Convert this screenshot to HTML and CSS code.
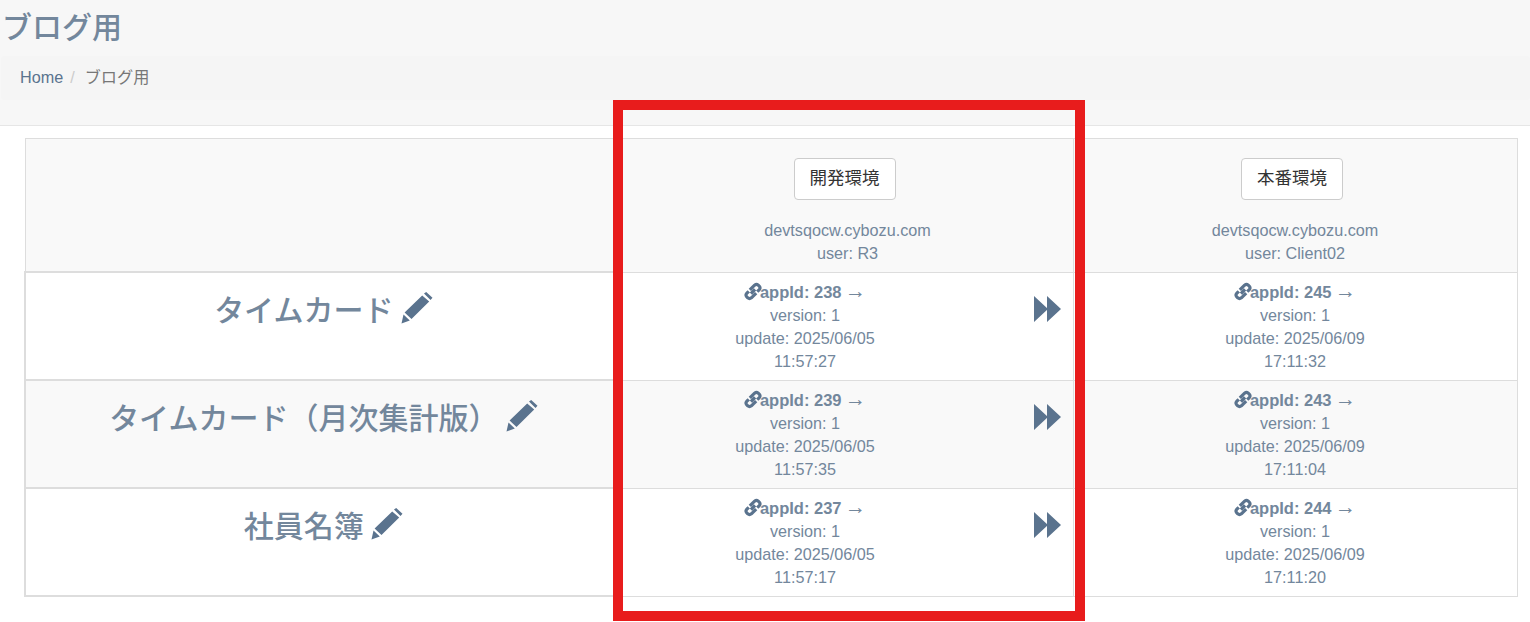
FILE: index.html
```html
<!DOCTYPE html>
<html>
<head>
  <meta charset="UTF-8">
  <title>ブログ用</title>
  <link rel="stylesheet" href="styles.css">
</head>
<body>
  <svg class="defs" width="0" height="0">
    <symbol id="pencil" viewBox="0 0 32 32">
      <path d="M23 1.5 L25.2 0 L31.5 5.8 L29.5 8 Z M21.2 3.4 L28.2 9.6 L10.5 27 L3.6 20.6 Z M2.5 22.5 L8.8 28.4 L0.5 31.5 Z"/>
    </symbol>
    <symbol id="link" viewBox="0 0 17 18">
      <path class="chain" d="M5.5 7.5 L10 3 Q11.8 1.6 13.5 3 L14.5 4 Q15.8 5.6 14.5 7.2 L12.5 9.2 M6.5 11 L10.5 7 M4.5 8.8 L2.5 10.8 Q1.2 12.4 2.5 14 L3.5 15 Q5.2 16.4 7 15 L11.5 10.5"/>
    </symbol>
    <symbol id="forward" viewBox="0 0 27 28">
      <path d="M0 1 L14 14 L0 27 Z M13 1 L27 14 L13 27 Z"/>
    </symbol>
  </svg>

  <div class="page-title">
    <h3>ブログ用</h3>
    <ul class="breadcrumb">
      <li><a href="#">Home</a></li>
      <li class="sep">/</li>
      <li class="active">ブログ用</li>
    </ul>
  </div>

  <div class="content">
    <table class="apps">
      <colgroup>
        <col class="col-name">
        <col class="col-dev">
        <col class="col-prod">
      </colgroup>
      <thead>
        <tr>
          <th></th>
          <th>
            <button class="btn">開発環境</button>
            <div>devtsqocw.cybozu.com</div>
            <div>user: R3</div>
          </th>
          <th>
            <button class="btn">本番環境</button>
            <div>devtsqocw.cybozu.com</div>
            <div>user: Client02</div>
          </th>
        </tr>
      </thead>
      <tbody>
        <tr>
          <td class="name">タイムカード <svg class="pencil"><use href="#pencil"/></svg></td>
          <td>
            <div class="dev-cell">
              <div class="info">
                <div><svg class="link"><use href="#link"/></svg><b>appId: 238</b> <span class="arrow">→</span></div>
                <div>version: 1</div>
                <div>update: 2025/06/05</div>
                <div>11:57:27</div>
              </div>
              <svg class="forward"><use href="#forward"/></svg>
            </div>
          </td>
          <td>
            <div class="info">
              <div><svg class="link"><use href="#link"/></svg><b>appId: 245</b> <span class="arrow">→</span></div>
              <div>version: 1</div>
              <div>update: 2025/06/09</div>
              <div>17:11:32</div>
            </div>
          </td>
        </tr>
        <tr>
          <td class="name">タイムカード（月次集計版） <svg class="pencil"><use href="#pencil"/></svg></td>
          <td>
            <div class="dev-cell">
              <div class="info">
                <div><svg class="link"><use href="#link"/></svg><b>appId: 239</b> <span class="arrow">→</span></div>
                <div>version: 1</div>
                <div>update: 2025/06/05</div>
                <div>11:57:35</div>
              </div>
              <svg class="forward"><use href="#forward"/></svg>
            </div>
          </td>
          <td>
            <div class="info">
              <div><svg class="link"><use href="#link"/></svg><b>appId: 243</b> <span class="arrow">→</span></div>
              <div>version: 1</div>
              <div>update: 2025/06/09</div>
              <div>17:11:04</div>
            </div>
          </td>
        </tr>
        <tr>
          <td class="name">社員名簿 <svg class="pencil"><use href="#pencil"/></svg></td>
          <td>
            <div class="dev-cell">
              <div class="info">
                <div><svg class="link"><use href="#link"/></svg><b>appId: 237</b> <span class="arrow">→</span></div>
                <div>version: 1</div>
                <div>update: 2025/06/05</div>
                <div>11:57:17</div>
              </div>
              <svg class="forward"><use href="#forward"/></svg>
            </div>
          </td>
          <td>
            <div class="info">
              <div><svg class="link"><use href="#link"/></svg><b>appId: 244</b> <span class="arrow">→</span></div>
              <div>version: 1</div>
              <div>update: 2025/06/09</div>
              <div>17:11:20</div>
            </div>
          </td>
        </tr>
      </tbody>
    </table>
  </div>

  <div class="highlight"></div>
</body>
</html>
```

FILE: styles.css
```css
body {
  font-family: "Liberation Sans", "Noto Sans CJK JP", sans-serif;
  font-size: 16.2px;
  line-height: 23.1px;
  color: #73879c;
  background: #fff;
  margin: 0;
  overflow: hidden;
}
.defs { position: absolute; }

.page-title {
  background: #f7f7f7;
  border-bottom: 1px solid #e6e6e6;
  height: 125px;
}
.page-title h3 {
  font-size: 30px;
  font-weight: 500;
  line-height: 36px;
  margin: 0;
  padding: 10px 0 10px 2px;
}
.breadcrumb {
  list-style: none;
  display: flex;
  background: #f5f5f5;
  border-radius: 4px;
  margin: 0 0 0 1px;
  padding: 10px 19px;
  height: 24px;
  line-height: 23px;
}
.breadcrumb a { color: #5a738e; text-decoration: none; }
.breadcrumb .sep { color: #ccc; margin: 0 10px 0 7px; }
.breadcrumb .active { color: #777; }

.content { padding: 12px 12px 0 24px; }
.apps {
  width: 1492px;
  table-layout: fixed;
  border-collapse: collapse;
}
.col-name { width: 597px; }
.col-dev { width: 451px; }
.col-prod { width: 444px; }
.apps th, .apps td {
  border: 1px solid #ddd;
  padding: 8px 8px 4px;
  text-align: center;
  vertical-align: top;
}
.apps th {
  background: #f9f9f9;
  font-weight: 400;
  padding: 19px 8px 6px;
  height: 107px;
}
.apps tbody tr { height: 108px; }
.apps tbody tr:nth-child(even) { background: #f9f9f9; }
.apps .name {
  border: 2px solid #ddd;
  font-size: 30px;
  line-height: 36px;
  font-weight: 500;
  padding: 19px 10px 3px 10px;
}
.apps thead .btn + div { margin-top: 19px; }

.btn {
  display: block;
  margin-left: calc(50% - 54px);
  width: 102px;
  height: 42px;
  background: #fff;
  border: 1px solid #ccc;
  border-radius: 4px;
  color: #333;
  font: inherit;
  font-size: 17.5px;
  padding: 0;
}

.dev-cell { display: flex; align-items: flex-start; }
.dev-cell .info { width: 348px; }
.forward {
  width: 27px;
  height: 28px;
  fill: #5a738e;
  margin: 14px 0 0 55px;
}
.pencil {
  width: 32px;
  height: 32px;
  fill: #5a738e;
  margin-left: -1px;
  vertical-align: -3px;
}
.info b { font-size: 16.5px; }
.link {
  width: 18px;
  height: 19px;
  margin: -4px -2px -2px 0;
  vertical-align: -1px;
}
.chain {
  fill: none;
  stroke: #5a738e;
  stroke-width: 3;
}
.arrow {
  font-size: 21px;
  line-height: 0;
  margin-left: -1px;
}

.highlight {
  position: absolute;
  left: 613px;
  top: 100px;
  width: 472px;
  height: 521px;
  box-sizing: border-box;
  border: 10px solid #e81c1c;
}
```
